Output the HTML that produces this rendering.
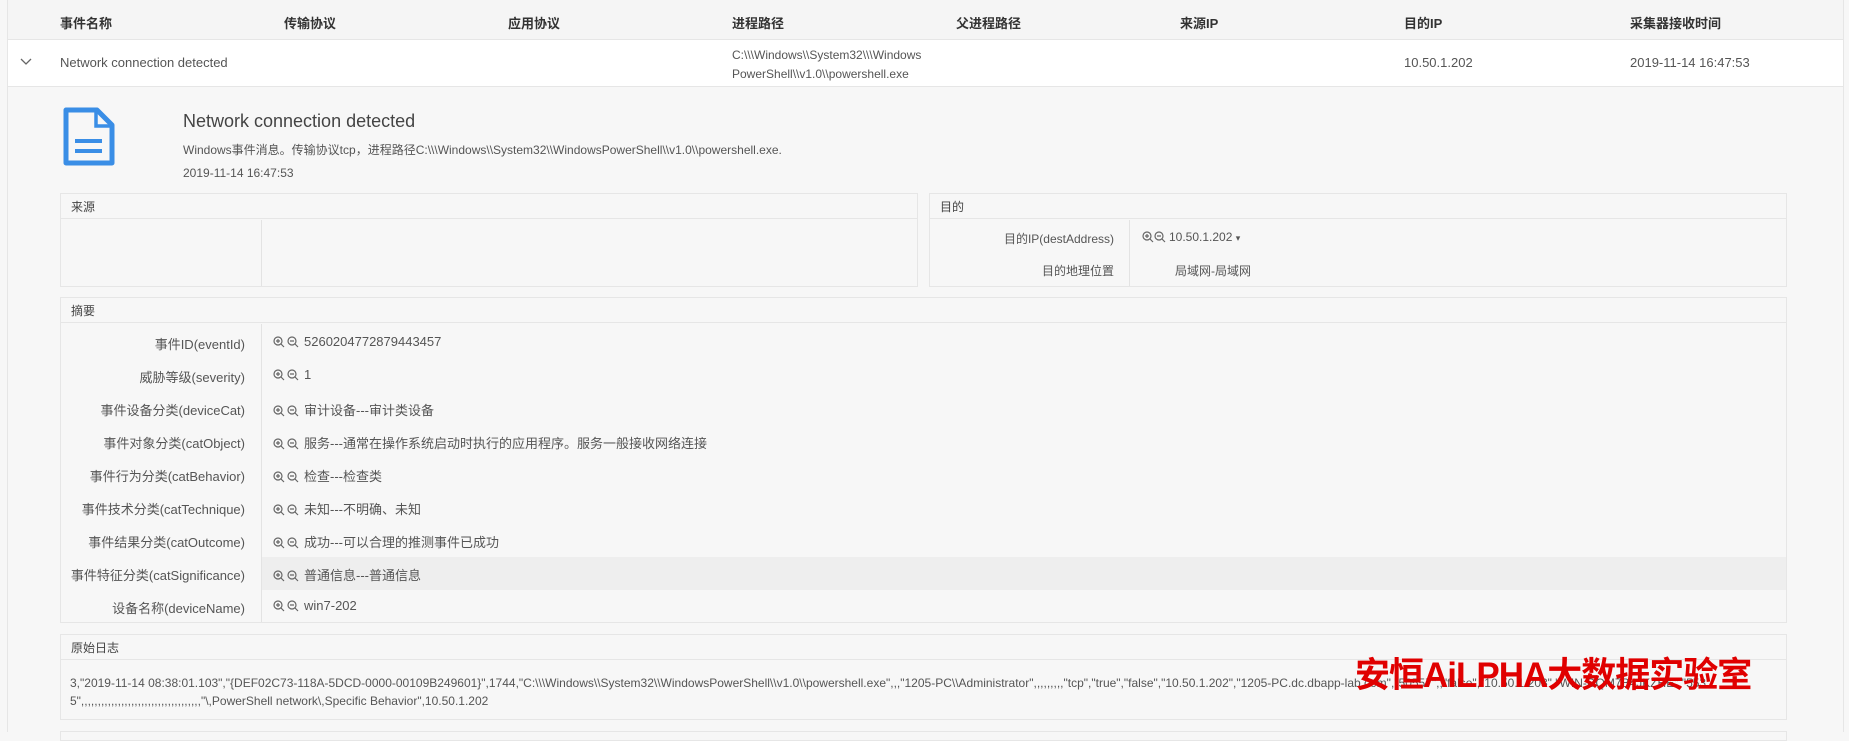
<!DOCTYPE html>
<html><head><meta charset="utf-8"><style>
*{margin:0;padding:0;box-sizing:border-box}
body{width:1849px;height:732px;overflow:hidden;background:#f7f7f7;font-family:"Liberation Sans","Noto Sans CJK SC",sans-serif;font-size:13px;color:#555;position:relative}
.a{position:absolute;white-space:nowrap}
.hdr{position:absolute;left:8px;top:0;width:1835px;height:40px;background:#f5f5f5;border-bottom:1px solid #e6e6e6}
.row{position:absolute;left:8px;top:40px;width:1835px;height:47px;background:#fff;border-bottom:1px solid #e6e6e6}
.vl{position:absolute;top:0;bottom:0;width:1px;background:#e3e3e3}
.th{font-weight:bold;color:#333;top:13px}
.panel{position:absolute;border:1px solid #e6e6e6;background:#f7f7f7}
.ph{height:25px;border-bottom:1px solid #e6e6e6;padding:4px 10px;font-size:12px;color:#444}
.lbl{position:absolute;text-align:right;white-space:nowrap;color:#555}
.ic{display:inline-block;vertical-align:-2px;margin-right:3px}
.v{position:absolute;left:273px;white-space:nowrap}
</style></head><body>
<div class="vl" style="left:7px;background:#e6e6e6"></div>
<div class="vl" style="left:1843px;background:#e6e6e6"></div>
<div class="hdr"></div>
<div class="a th" style="left:60px">事件名称</div>
<div class="a th" style="left:284px">传输协议</div>
<div class="a th" style="left:508px">应用协议</div>
<div class="a th" style="left:732px">进程路径</div>
<div class="a th" style="left:956px">父进程路径</div>
<div class="a th" style="left:1180px">来源IP</div>
<div class="a th" style="left:1404px">目的IP</div>
<div class="a th" style="left:1630px">采集器接收时间</div>
<div class="row"></div>
<svg class="a" style="left:20px;top:58px" width="12" height="8"><path d="M1 1 L6 6 L11 1" fill="none" stroke="#666" stroke-width="1.3"/></svg>
<div class="a" style="left:60px;top:55px">Network connection detected</div>
<div class="a" style="left:732px;top:46px;line-height:19px;font-size:12px">C:\\\Windows\\System32\\\Windows<br>PowerShell\\v1.0\\powershell.exe</div>
<div class="a" style="left:1404px;top:55px">10.50.1.202</div>
<div class="a" style="left:1630px;top:55px">2019-11-14 16:47:53</div>

<svg class="a" style="left:62px;top:107px" width="54" height="60" viewBox="0 0 54 60"><path d="M4 3 H35 L50 18 V56 H4 Z" fill="none" stroke="#3a8ee6" stroke-width="5" stroke-linejoin="round"/><path d="M34 4 V19 H49" fill="none" stroke="#3a8ee6" stroke-width="3.5"/><path d="M13 34 H40 M13 44 H40" stroke="#3a8ee6" stroke-width="4"/></svg>
<div class="a" style="left:183px;top:111px;font-size:18px;color:#444">Network connection detected</div>
<div class="a" style="left:183px;top:141px;font-size:12px">Windows事件消息。传输协议tcp，进程路径C:\\\Windows\\System32\\WindowsPowerShell\\v1.0\\powershell.exe.</div>
<div class="a" style="left:183px;top:166px;font-size:12px">2019-11-14 16:47:53</div>

<div class="panel" style="left:60px;top:193px;width:858px;height:94px"><div class="ph">来源</div><div class="vl" style="left:200px;top:26px"></div></div>
<div class="panel" style="left:929px;top:193px;width:858px;height:94px"><div class="ph">目的</div><div class="vl" style="left:199px;top:26px"></div>
<div class="lbl" style="right:672px;top:36px;font-size:12px">目的IP(destAddress)</div>
<div class="lbl" style="right:672px;top:68px;font-size:12px">目的地理位置</div>
<div class="a" style="left:212px;top:36px;font-size:12px"><svg class="ic" width="24" height="12"><circle cx="5" cy="5" r="4" fill="none" stroke="#666" stroke-width="1.2"/><path d="M3 5H7M5 3V7M8 8L11 11" stroke="#666" stroke-width="1.2"/><circle cx="17" cy="5" r="4" fill="none" stroke="#666" stroke-width="1.2"/><path d="M15 5H19M20 8L23 11" stroke="#666" stroke-width="1.2"/></svg>10.50.1.202 <span style="font-size:9px">▾</span></div>
<div class="a" style="left:245px;top:68px;font-size:12px">局域网-局域网</div>
</div>

<div class="panel" style="left:60px;top:297px;width:1727px;height:326px"><div class="ph">摘要</div>
<div style="position:absolute;left:200px;right:0;top:259px;height:33px;background:#eeeeee"></div>
<div class="vl" style="left:200px;top:26px"></div>
</div>
<div class="lbl" style="right:1604px;top:334px">事件ID(eventId)</div>
<div class="lbl" style="right:1604px;top:367px">威胁等级(severity)</div>
<div class="lbl" style="right:1604px;top:400px">事件设备分类(deviceCat)</div>
<div class="lbl" style="right:1604px;top:433px">事件对象分类(catObject)</div>
<div class="lbl" style="right:1604px;top:466px">事件行为分类(catBehavior)</div>
<div class="lbl" style="right:1604px;top:499px">事件技术分类(catTechnique)</div>
<div class="lbl" style="right:1604px;top:532px">事件结果分类(catOutcome)</div>
<div class="lbl" style="right:1604px;top:565px">事件特征分类(catSignificance)</div>
<div class="lbl" style="right:1604px;top:598px">设备名称(deviceName)</div>

<div class="v" style="top:334px"><svg class="ic" width="28" height="12"><circle cx="5" cy="5" r="4" fill="none" stroke="#666" stroke-width="1.2"/><path d="M3 5H7M5 3V7M8 8L11 11" stroke="#666" stroke-width="1.2"/><circle cx="19" cy="5" r="4" fill="none" stroke="#666" stroke-width="1.2"/><path d="M17 5H21M22 8L25 11" stroke="#666" stroke-width="1.2"/></svg>5260204772879443457</div>
<div class="v" style="top:367px"><svg class="ic" width="28" height="12"><circle cx="5" cy="5" r="4" fill="none" stroke="#666" stroke-width="1.2"/><path d="M3 5H7M5 3V7M8 8L11 11" stroke="#666" stroke-width="1.2"/><circle cx="19" cy="5" r="4" fill="none" stroke="#666" stroke-width="1.2"/><path d="M17 5H21M22 8L25 11" stroke="#666" stroke-width="1.2"/></svg>1</div>
<div class="v" style="top:400px"><svg class="ic" width="28" height="12"><circle cx="5" cy="5" r="4" fill="none" stroke="#666" stroke-width="1.2"/><path d="M3 5H7M5 3V7M8 8L11 11" stroke="#666" stroke-width="1.2"/><circle cx="19" cy="5" r="4" fill="none" stroke="#666" stroke-width="1.2"/><path d="M17 5H21M22 8L25 11" stroke="#666" stroke-width="1.2"/></svg>审计设备---审计类设备</div>
<div class="v" style="top:433px"><svg class="ic" width="28" height="12"><circle cx="5" cy="5" r="4" fill="none" stroke="#666" stroke-width="1.2"/><path d="M3 5H7M5 3V7M8 8L11 11" stroke="#666" stroke-width="1.2"/><circle cx="19" cy="5" r="4" fill="none" stroke="#666" stroke-width="1.2"/><path d="M17 5H21M22 8L25 11" stroke="#666" stroke-width="1.2"/></svg>服务---通常在操作系统启动时执行的应用程序。服务一般接收网络连接</div>
<div class="v" style="top:466px"><svg class="ic" width="28" height="12"><circle cx="5" cy="5" r="4" fill="none" stroke="#666" stroke-width="1.2"/><path d="M3 5H7M5 3V7M8 8L11 11" stroke="#666" stroke-width="1.2"/><circle cx="19" cy="5" r="4" fill="none" stroke="#666" stroke-width="1.2"/><path d="M17 5H21M22 8L25 11" stroke="#666" stroke-width="1.2"/></svg>检查---检查类</div>
<div class="v" style="top:499px"><svg class="ic" width="28" height="12"><circle cx="5" cy="5" r="4" fill="none" stroke="#666" stroke-width="1.2"/><path d="M3 5H7M5 3V7M8 8L11 11" stroke="#666" stroke-width="1.2"/><circle cx="19" cy="5" r="4" fill="none" stroke="#666" stroke-width="1.2"/><path d="M17 5H21M22 8L25 11" stroke="#666" stroke-width="1.2"/></svg>未知---不明确、未知</div>
<div class="v" style="top:532px"><svg class="ic" width="28" height="12"><circle cx="5" cy="5" r="4" fill="none" stroke="#666" stroke-width="1.2"/><path d="M3 5H7M5 3V7M8 8L11 11" stroke="#666" stroke-width="1.2"/><circle cx="19" cy="5" r="4" fill="none" stroke="#666" stroke-width="1.2"/><path d="M17 5H21M22 8L25 11" stroke="#666" stroke-width="1.2"/></svg>成功---可以合理的推测事件已成功</div>
<div class="v" style="top:565px"><svg class="ic" width="28" height="12"><circle cx="5" cy="5" r="4" fill="none" stroke="#666" stroke-width="1.2"/><path d="M3 5H7M5 3V7M8 8L11 11" stroke="#666" stroke-width="1.2"/><circle cx="19" cy="5" r="4" fill="none" stroke="#666" stroke-width="1.2"/><path d="M17 5H21M22 8L25 11" stroke="#666" stroke-width="1.2"/></svg>普通信息---普通信息</div>
<div class="v" style="top:598px"><svg class="ic" width="28" height="12"><circle cx="5" cy="5" r="4" fill="none" stroke="#666" stroke-width="1.2"/><path d="M3 5H7M5 3V7M8 8L11 11" stroke="#666" stroke-width="1.2"/><circle cx="19" cy="5" r="4" fill="none" stroke="#666" stroke-width="1.2"/><path d="M17 5H21M22 8L25 11" stroke="#666" stroke-width="1.2"/></svg>win7-202</div>

<div class="panel" style="left:60px;top:634px;width:1727px;height:86px"><div class="ph">原始日志</div></div>
<div class="a" style="left:70px;top:674px;font-size:12px;line-height:18px;color:#555">3,"2019-11-14 08:38:01.103","{DEF02C73-118A-5DCD-0000-00109B249601}",1744,"C:\\\Windows\\System32\\WindowsPowerShell\\v1.0\\powershell.exe",,,"1205-PC\\Administrator",,,,,,,,,"tcp","true","false","10.50.1.202","1205-PC.dc.dbapp-lab.com","50557",,"false","10.50.1.203","WIN-DQM7B4JKZHE","553<br>5",,,,,,,,,,,,,,,,,,,,,,,,,,,,,,,,,,,,"\,PowerShell network\,Specific Behavior",10.50.1.202</div>
<div class="panel" style="left:60px;top:731px;width:1727px;height:10px"></div>
<div class="a" style="left:1355px;top:647px;font-size:35px;font-weight:bold;color:#e00000;letter-spacing:-1px">安恒AiLPHA大数据实验室</div>
</body></html>
